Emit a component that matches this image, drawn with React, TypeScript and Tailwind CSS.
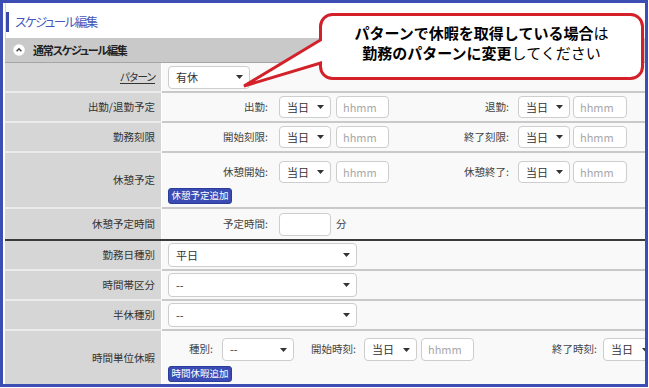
import React from "react";

function Caret() {
  return (
    <svg width="7" height="4" viewBox="0 0 7 4" className="shrink-0">
      <path d="M0 0H7L3.5 4Z" fill="#333" />
    </svg>
  );
}

function Sel({ cls, text }: { cls: string; text: string }) {
  return (
    <div
      className={
        "shrink-0 flex items-center justify-between bg-white border border-[#cdcdcd] rounded-[4px] pl-[7px] pr-[6px] text-[11px] text-[#333] leading-none " +
        cls
      }
    >
      <span>{text}</span>
      <Caret />
    </div>
  );
}

function Inp({ cls, ph }: { cls: string; ph?: string }) {
  return (
    <div
      className={
        "shrink-0 flex items-center bg-white border border-[#cdcdcd] rounded-[4px] pl-[6px] text-[11px] text-[#a8a8a8] leading-none " +
        cls
      }
    >
      {ph}
    </div>
  );
}

function Btn({ text }: { text: string }) {
  return (
    <div className="shrink-0 w-[64px] h-[16px] bg-[#3a4cb3] border border-[#2c3c9a] rounded-[3px] text-white text-[9.5px] leading-none flex items-center justify-center">
      {text}
    </div>
  );
}

function Lbl({ cls, text }: { cls: string; text: string }) {
  return (
    <div className={"shrink-0 text-right pr-[2px] text-[10.5px] text-[#444] leading-none " + cls}>
      {text}
    </div>
  );
}

export default function App() {
  return (
    <div className="w-[649px] h-[388px] bg-white relative overflow-hidden font-['Noto_Sans_CJK_JP',sans-serif] [font-feature-settings:'palt']">
      <div className="w-[648px] h-[387px] border-[3px] border-[#3c4db4] pl-[2px] flex flex-col overflow-hidden">
        {/* title */}
        <div className="h-[35px] shrink-0 flex items-center pt-[3px] border-l border-[#d8d8d8]">
          <div className="w-[3px] h-[20px] bg-[#3949ab]" />
          <span className="ml-[6px] text-[12.5px] tracking-[-1.5px] text-[#4557bd] leading-none">スケジュール編集</span>
        </div>
        {/* header */}
        <div className="h-[25px] shrink-0 bg-[#c9c9c9] border-b border-[#a5a5a5] flex items-center pl-[8px]">
          <svg width="12" height="12" viewBox="0 0 12 12" className="shrink-0">
            <circle cx="6" cy="6" r="5.8" fill="#fff" />
            <path d="M3.6 7.2L6 4.8L8.4 7.2" fill="none" stroke="#444" strokeWidth="1.5" />
          </svg>
          <span className="ml-[8px] text-[11px] tracking-[-1.2px] font-bold text-[#222] leading-none">通常スケジュール編集</span>
        </div>

        {/* row 1 */}
        <div className="flex h-[30px] shrink-0">
          <div className="w-[157px] shrink-0 bg-[#d6d6d6] border-r border-r-white border-b-2 border-b-[#ebebeb] flex items-center justify-end pr-[6px] text-[10.5px] text-[#333]">
            <span className="underline underline-offset-2 tracking-[-0.8px]">パターン</span>
          </div>
          <div className="flex-1 bg-[#f9f9f9] border-b-2 border-b-[#c9c9c9] flex items-center pl-[6px] overflow-hidden whitespace-nowrap">
            <Sel cls="w-[82px] h-[23px]" text="有休" />
          </div>
        </div>

        {/* row 2 */}
        <div className="flex h-[30px] shrink-0">
          <div className="w-[157px] shrink-0 bg-[#d6d6d6] border-r border-r-white border-b-2 border-b-[#ebebeb] flex items-center justify-end pr-[6px] text-[10.5px] text-[#333]">
            出勤/退勤予定
          </div>
          <div className="flex-1 bg-[#f9f9f9] border-b-2 border-b-[#c9c9c9] flex items-center pl-[6px] overflow-hidden whitespace-nowrap">
            <Lbl cls="w-[102px]" text="出勤:" />
            <Sel cls="ml-[9px] w-[52px] h-[22px]" text="当日" />
            <Inp cls="ml-[5px] w-[53px] h-[22px]" ph="hhmm" />
            <Lbl cls="w-[122px]" text="退勤:" />
            <Sel cls="ml-[7px] w-[52px] h-[22px]" text="当日" />
            <Inp cls="ml-[3px] w-[54px] h-[22px]" ph="hhmm" />
          </div>
        </div>

        {/* row 3 */}
        <div className="flex h-[30px] shrink-0">
          <div className="w-[157px] shrink-0 bg-[#d6d6d6] border-r border-r-white border-b-2 border-b-[#ebebeb] flex items-center justify-end pr-[6px] text-[10.5px] text-[#333]">
            勤務刻限
          </div>
          <div className="flex-1 bg-[#f9f9f9] border-b-2 border-b-[#c9c9c9] flex items-center pl-[6px] overflow-hidden whitespace-nowrap">
            <Lbl cls="w-[102px]" text="開始刻限:" />
            <Sel cls="ml-[9px] w-[52px] h-[22px]" text="当日" />
            <Inp cls="ml-[5px] w-[53px] h-[22px]" ph="hhmm" />
            <Lbl cls="w-[122px]" text="終了刻限:" />
            <Sel cls="ml-[7px] w-[52px] h-[22px]" text="当日" />
            <Inp cls="ml-[3px] w-[54px] h-[22px]" ph="hhmm" />
          </div>
        </div>

        {/* row 4 */}
        <div className="flex h-[56px] shrink-0">
          <div className="w-[157px] shrink-0 bg-[#d6d6d6] border-r border-r-white border-b-2 border-b-[#ebebeb] flex items-center justify-end pr-[6px] text-[10.5px] text-[#333]">
            休憩予定
          </div>
          <div className="flex-1 bg-[#f9f9f9] border-b-2 border-b-[#c9c9c9] flex flex-col items-start pl-[6px] pt-[8px] overflow-hidden whitespace-nowrap">
            <div className="flex items-center">
              <Lbl cls="w-[102px]" text="休憩開始:" />
              <Sel cls="ml-[9px] w-[52px] h-[22px]" text="当日" />
              <Inp cls="ml-[5px] w-[53px] h-[22px]" ph="hhmm" />
              <Lbl cls="w-[122px]" text="休憩終了:" />
              <Sel cls="ml-[7px] w-[52px] h-[22px]" text="当日" />
              <Inp cls="ml-[3px] w-[54px] h-[22px]" ph="hhmm" />
            </div>
            <div className="mt-[5px]">
              <Btn text="休憩予定追加" />
            </div>
          </div>
        </div>

        {/* row 5 */}
        <div className="flex h-[32px] shrink-0 border-b-2 border-b-[#3a3a3a]">
          <div className="w-[157px] shrink-0 bg-[#d6d6d6] border-r border-r-white flex items-center justify-end pr-[6px] text-[10.5px] text-[#333]">
            休憩予定時間
          </div>
          <div className="flex-1 bg-[#f9f9f9] flex items-center pl-[6px] overflow-hidden whitespace-nowrap">
            <Lbl cls="w-[102px]" text="予定時間:" />
            <Inp cls="ml-[9px] w-[52px] h-[23px]" />
            <span className="ml-[5px] text-[10.5px] text-[#444] leading-none">分</span>
          </div>
        </div>

        {/* row 6 */}
        <div className="flex h-[30px] shrink-0">
          <div className="w-[157px] shrink-0 bg-[#d6d6d6] border-r border-r-white border-b-2 border-b-[#ebebeb] flex items-center justify-end pr-[6px] text-[10.5px] text-[#333]">
            勤務日種別
          </div>
          <div className="flex-1 bg-[#f9f9f9] border-b-2 border-b-[#c9c9c9] flex items-center pl-[6px] overflow-hidden whitespace-nowrap">
            <Sel cls="w-[189px] h-[24px]" text="平日" />
          </div>
        </div>

        {/* row 7 */}
        <div className="flex h-[30px] shrink-0">
          <div className="w-[157px] shrink-0 bg-[#d6d6d6] border-r border-r-white border-b-2 border-b-[#ebebeb] flex items-center justify-end pr-[6px] text-[10.5px] text-[#333]">
            時間帯区分
          </div>
          <div className="flex-1 bg-[#f9f9f9] border-b-2 border-b-[#c9c9c9] flex items-center pl-[6px] overflow-hidden whitespace-nowrap">
            <Sel cls="w-[189px] h-[24px]" text="--" />
          </div>
        </div>

        {/* row 8 */}
        <div className="flex h-[30px] shrink-0">
          <div className="w-[157px] shrink-0 bg-[#d6d6d6] border-r border-r-white border-b-2 border-b-[#ebebeb] flex items-center justify-end pr-[6px] text-[10.5px] text-[#333]">
            半休種別
          </div>
          <div className="flex-1 bg-[#f9f9f9] border-b-2 border-b-[#c9c9c9] flex items-center pl-[6px] overflow-hidden whitespace-nowrap">
            <Sel cls="w-[189px] h-[24px]" text="--" />
          </div>
        </div>

        {/* row 9 */}
        <div className="flex flex-1 min-h-0">
          <div className="w-[157px] shrink-0 bg-[#d6d6d6] border-r border-r-white flex items-center justify-end pr-[6px] text-[10.5px] text-[#333]">
            時間単位休暇
          </div>
          <div className="flex-1 bg-[#f9f9f9] flex flex-col items-start pl-[6px] pt-[7px] overflow-hidden whitespace-nowrap">
            <div className="flex items-center">
              <Lbl cls="w-[47px]" text="種別:" />
              <Sel cls="ml-[7px] w-[72px] h-[23px]" text="--" />
              <Lbl cls="w-[64px]" text="開始時刻:" />
              <Sel cls="ml-[6px] w-[53px] h-[23px]" text="当日" />
              <Inp cls="ml-[4px] w-[53px] h-[23px]" ph="hhmm" />
              <Lbl cls="w-[125px]" text="終了時刻:" />
              <Sel cls="ml-[4px] w-[53px] h-[23px]" text="当日" />
              <Inp cls="ml-[4px] w-[53px] h-[23px]" ph="hhmm" />
            </div>
            <div className="mt-[5px]">
              <Btn text="時間休暇追加" />
            </div>
          </div>
        </div>
      </div>

      {/* callout */}
      <svg className="absolute left-0 top-0 pointer-events-none" width="649" height="388" viewBox="0 0 649 388">
        <path
          d="M244 86 L320.5 40 V26.5 A12 12 0 0 1 332.5 14.5 H630.5 A12 12 0 0 1 642.5 26.5 V66.5 A12 12 0 0 1 630.5 78.5 H332.5 A12 12 0 0 1 320.5 66.5 V63 Z"
          fill="#fff"
          stroke="#d32029"
          strokeWidth="3"
        />
      </svg>
      <div className="absolute left-[319px] top-[13px] w-[325px] h-[67px] pt-[10px] flex flex-col items-center text-[15px] leading-[20px] text-black [font-feature-settings:normal] whitespace-nowrap">
        <div>
          <span className="font-bold">パターンで休暇を取得している場合</span>
          <span>は</span>
        </div>
        <div>
          <span className="font-bold">勤務のパターンに変更</span>
          <span>してください</span>
        </div>
      </div>
    </div>
  );
}
